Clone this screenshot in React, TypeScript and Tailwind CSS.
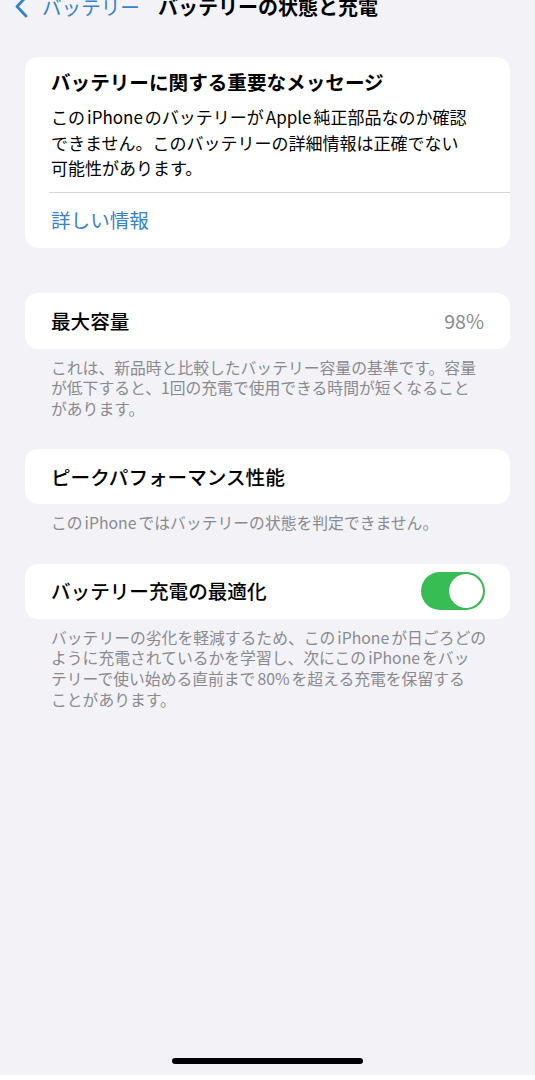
import React from "react";

const font = { fontFamily: '"Noto Sans CJK JP", "Noto Sans", sans-serif' };

// latin words get a little breathing room between kana, like iOS does
function L({ children }: { children: React.ReactNode }) {
  return <span className="mx-[2px]">{children}</span>;
}

function Footer({ children }: { children: React.ReactNode }) {
  return (
    <p className="mt-[9px] whitespace-nowrap px-[26px] text-[15.8px] leading-[20.8px] text-[#8a8a8e]">
      {children}
    </p>
  );
}

function Toggle() {
  return (
    <div className="flex h-[38px] w-[64px] items-center justify-end rounded-full bg-[#38bd54] p-[2px]">
      <div className="h-[34px] w-[34px] rounded-full bg-white shadow-[0_0_1px_rgba(0,0,0,0.35)]" />
    </div>
  );
}

export default function App() {
  return (
    <div className="relative min-h-[1080px] bg-[#f2f2f7] text-black" style={font}>
      {/* nav bar, scrolled up so it sits at the top edge */}
      <div className="-mt-[5px] flex h-[24px] items-center pl-[14px]">
        <svg width="16" height="24" viewBox="0 0 16 24" className="mr-[12px]">
          <path d="M12 2 L3 11.5 L12 21" fill="none" stroke="#3883c8" strokeWidth="2.8" strokeLinecap="round" strokeLinejoin="round" />
        </svg>
        <span className="text-[19.6px] leading-[24px] text-[#3883c8]">バッテリー</span>
        <span className="ml-[18px] text-[20px] font-bold leading-[24px]">バッテリーの状態と充電</span>
      </div>

      <div className="px-[25px] pt-[38px]">
        {/* important message */}
        <div className="rounded-[13px] bg-white">
          <div className="px-[26px] pt-[11px] pb-[11px]">
            <h2 className="text-[19.6px] font-bold leading-[28px]">バッテリーに関する重要なメッセージ</h2>
            <p className="mt-[8px] whitespace-nowrap text-[17px] leading-[25.5px]">
              この<L>iPhone</L>のバッテリーが<L>Apple</L>純正部品なのか確認
              <br />
              できません。このバッテリーの詳細情報は正確でない
              <br />
              可能性があります。
            </p>
          </div>
          <div className="ml-[24px] h-px bg-[#d6d6da]" />
          <div className="flex h-[55px] items-center px-[26px] text-[19.6px] text-[#3883c8]">詳しい情報</div>
        </div>

        {/* max capacity */}
        <div className="mt-[45px] flex h-[56px] items-center justify-between rounded-[13px] bg-white px-[26px]">
          <span className="text-[19.6px] font-medium">最大容量</span>
          <span className="text-[19.6px] text-[#8a8a8e]">98%</span>
        </div>
        <Footer>
          これは、新品時と比較したバッテリー容量の基準です。容量
          <br />
          が低下すると、1回の充電で使用できる時間が短くなること
          <br />
          があります。
        </Footer>

        {/* peak performance */}
        <div className="mt-[29px] flex h-[55px] items-center rounded-[13px] bg-white px-[26px]">
          <span className="text-[19.6px] font-medium">ピークパフォーマンス性能</span>
        </div>
        <Footer>
          この<L>iPhone</L>ではバッテリーの状態を判定できません。
        </Footer>

        {/* optimized charging */}
        <div className="mt-[30px] flex h-[55px] items-center justify-between rounded-[13px] bg-white pl-[26px] pr-[25px]">
          <span className="text-[19.6px] font-medium">バッテリー充電の最適化</span>
          <Toggle />
        </div>
        <Footer>
          バッテリーの劣化を軽減するため、この<L>iPhone</L>が日ごろどの
          <br />
          ように充電されているかを学習し、次にこの<L>iPhone</L>をバッ
          <br />
          テリーで使い始める直前まで<L>80%</L>を超える充電を保留する
          <br />
          ことがあります。
        </Footer>
      </div>

      {/* home indicator */}
      <div className="absolute bottom-[11px] left-[172px] h-[6px] w-[191px] rounded-full bg-black" />
    </div>
  );
}
